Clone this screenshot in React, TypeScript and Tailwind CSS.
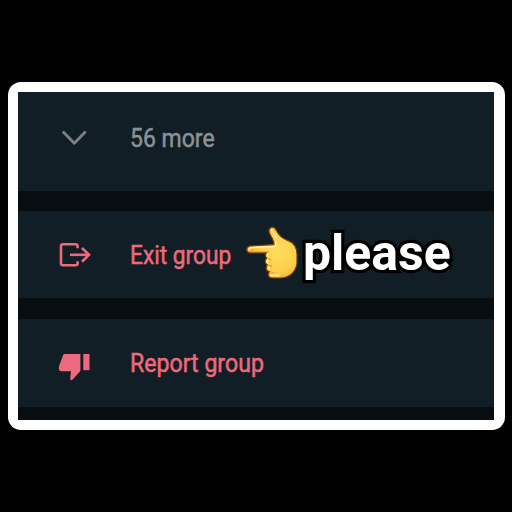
import React from "react";

function ChevronIcon() {
  return (
    <svg className="h-[30px] w-[34px] shrink-0" viewBox="0 0 34 30" fill="none">
      <path d="M4.8 8.4 L16.3 20.2 L27.7 8.4" stroke="#7c7f81" strokeWidth="2.9" strokeLinejoin="round" />
    </svg>
  );
}

function ExitIcon() {
  return (
    <svg className="h-[30px] w-[34px] shrink-0" viewBox="0 0 34 30" fill="none" stroke="#ed697d" strokeWidth="2.6">
      <path d="M19.6 8.2 V6.2 Q19.6 4.2 17.6 4.2 H5 Q3 4.2 3 6.2 V23.2 Q3 25.2 5 25.2 H17.6 Q19.6 25.2 19.6 23.2 V21.3" />
      <path d="M12 14.8 H31.2" />
      <path d="M24 8 L31 14.8 L24 21.7" />
    </svg>
  );
}

function ThumbDownIcon() {
  return (
    <svg className="h-[34px] w-[34px] shrink-0" viewBox="0 0 34 34" fill="#ed697d">
      <path d="M6.8 6 H22.4 V23 L14.2 32 Q12.8 32.8 12.1 30.8 L13 23.3 H3.2 Q0.9 23.3 0.9 20.8 V18.5 L5 7.4 Q5.5 6 6.8 6 Z" />
      <path d="M25.3 6 H31.5 V22.2 H25.3 Z" />
    </svg>
  );
}

function PointingHand() {
  return (
    <svg className="h-[56px] w-[56px] shrink-0" viewBox="0 0 56 56">
      <defs>
        <radialGradient id="skin" cx="0.62" cy="0.48" r="0.6">
          <stop offset="0" stopColor="#ffdc5e" />
          <stop offset="0.65" stopColor="#fdcf4c" />
          <stop offset="1" stopColor="#f0a832" />
        </radialGradient>
      </defs>
      <path
        d="M26.1 2.5 C28.2 1.6 29.8 2.4 31 4.8 C33.2 9.3 36.5 13.2 42 15.1 C48.8 17.4 52 22 52 29.5 V38 C51.3 45.5 45.5 52.6 36.5 53 H27 C23.4 52.8 22.3 50 24.2 46.7 C21 46 20.2 43 22.3 39.7 C19.6 38.4 19.5 35.3 21.6 33 C20 31.8 19.9 29.6 21.3 27.8 H4.8 C1.2 27.5 0.3 22.5 4.6 21 L29 19.6 C29.5 16.5 26.3 12.4 24.5 8.2 C23.4 5.4 24.2 3.4 26.1 2.5 Z"
        fill="url(#skin)"
        stroke="#7b3b10"
        strokeWidth="1.2"
      />
      <path d="M3.8 24.8 Q4 22.8 6 22.7 L28.5 21.7 Q31.3 21 30.8 17.8 M26.6 4.7 Q28 8.8 32 13" fill="none" stroke="#fff0a8" strokeWidth="1.5" strokeLinecap="round" />
      <path d="M6 26.8 H23.5 M23 33.5 Q25 33.5 25.5 35 M24 40.4 Q26 40.3 26.5 42 M25.8 47 Q27.5 46.8 28 48" fill="none" stroke="#e99a2a" strokeWidth="1.1" strokeLinecap="round" />
      <path d="M22.8 29.5 V31 M22.6 35.5 V37.5 M24.2 42.5 V44.4 M26 50.4 H34" fill="none" stroke="#ffefb5" strokeWidth="1.6" strokeLinecap="round" />
    </svg>
  );
}

export default function App() {
  return (
    <main className="h-[512px] w-[512px] overflow-hidden bg-black pl-[8px] pt-[82px] font-[Roboto,sans-serif]">
      <section className="h-[348px] w-[496.5px] rounded-[13px] bg-white pl-[10.4px] pt-[10px]">
        <div className="flex h-[327.5px] w-[476px] flex-col bg-[#080d11]">
          <div className="flex h-[98.5px] shrink-0 items-start bg-[#111e25] pl-[40px] pt-[31px]">
            <ChevronIcon />
            <span className="ml-[38px] mt-px origin-left scale-x-[0.92] whitespace-nowrap text-[25px] leading-[30px] text-[#8b9296] [-webkit-text-stroke:0.5px_#8b9296]">56 more</span>
          </div>
          <div className="mt-[20.5px] flex h-[87px] shrink-0 items-start bg-[#111e25] pl-[40px]">
            <div className="mt-[29px]"><ExitIcon /></div>
            <div className="ml-[38px] mt-[30px] w-[115px]">
              <span className="inline-block origin-left scale-x-[0.91] whitespace-nowrap text-[25px] leading-[30px] text-[#ed697d] [-webkit-text-stroke:0.5px_#ed697d]">Exit group</span>
            </div>
            <div className="mt-[14px]"><PointingHand /></div>
            <span className="ml-[1.5px] mt-[12px] origin-left whitespace-nowrap text-[50px] font-bold leading-[60px] text-white [-webkit-text-stroke:6.5px_#000] [paint-order:stroke_fill]">please</span>
          </div>
          <div className="mt-[21px] flex h-[87.5px] shrink-0 items-start bg-[#111e25] pl-[40px]">
            <div className="mt-[29px]"><ThumbDownIcon /></div>
            <span className="ml-[38px] mt-[30px] origin-left scale-x-[0.925] whitespace-nowrap text-[25px] leading-[30px] text-[#ed697d] [-webkit-text-stroke:0.5px_#ed697d]">Report group</span>
          </div>
        </div>
      </section>
    </main>
  );
}
